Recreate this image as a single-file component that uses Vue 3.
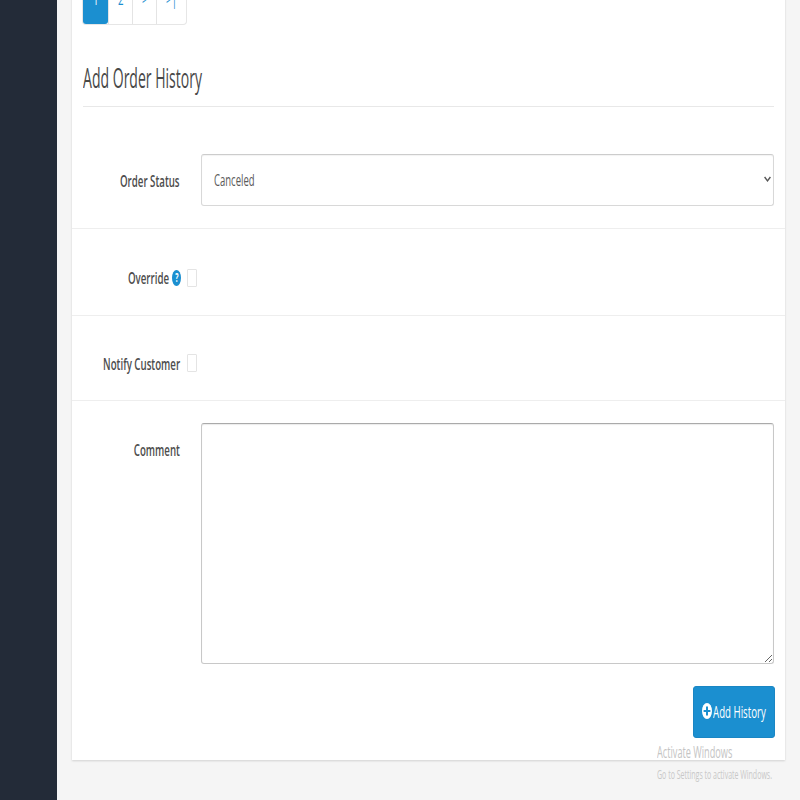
<template>
  <div class="page">
    <aside class="sidebar"></aside>
    <main class="content">
      <section class="card">
        <ul class="pagination">
          <li v-for="(p, i) in pages" :key="p" :class="['page-item', { active: i === 0 }]">
            <span class="squeeze">{{ p }}</span>
          </li>
        </ul>
        <h2 class="title"><span class="squeeze left">Add Order History</span></h2>

        <div class="row">
          <label class="label"><span class="squeeze right">Order Status</span></label>
          <div class="select">
            <span class="squeeze left">Canceled</span>
            <svg class="caret" width="7" height="6" viewBox="0 0 7 6">
              <path d="M.6 1l2.9 3.8L6.4 1" fill="none" stroke="#555" stroke-width="1.4" />
            </svg>
          </div>
        </div>

        <div class="row check-row override">
          <label class="label">
            <span class="squeeze right">Override</span>
            <span class="help"><span class="squeeze">?</span></span>
          </label>
          <input class="check" type="checkbox" />
        </div>

        <div class="row check-row notify">
          <label class="label"><span class="squeeze right pad">Notify Customer</span></label>
          <input class="check" type="checkbox" />
        </div>

        <div class="row comment">
          <label class="label"><span class="squeeze right">Comment</span></label>
          <textarea class="textarea"></textarea>
        </div>

        <div class="actions">
          <button class="btn" type="button">
            <svg class="plus" width="10" height="16" viewBox="0 0 10 16">
              <ellipse cx="5" cy="8" rx="5" ry="8" fill="#fff" />
              <path d="M1.6 8h6.8M5 3.4v9.2" stroke="#1b8fd0" stroke-width="2" />
            </svg>
            <span class="squeeze left">Add History</span>
          </button>
        </div>
      </section>
    </main>

    <div class="watermark">
      <div class="wm-title"><span class="squeeze left">Activate Windows</span></div>
      <div class="wm-sub"><span class="squeeze left">Go to Settings to activate Windows.</span></div>
    </div>
  </div>
</template>

<script setup>
const pages = ['1', '2', '>', '>|']
</script>

<style>
html, body { margin: 0; padding: 0; overflow: hidden; }
</style>

<style scoped>
.page {
  position: relative;
  display: flex;
  height: 800px;
  overflow: hidden;
  background: #f5f5f5;
  font-family: "Open Sans", "Liberation Sans", sans-serif;
  color: #555;
}
.sidebar { width: 57px; flex: none; background: #232b38; }
.content { flex: 1; padding: 0 15px; min-width: 0; }
.card {
  margin-top: -28px;
  height: 788px;
  box-sizing: border-box;
  background: #fff;
  box-shadow: 0 1px 2px rgba(0, 0, 0, .15);
}

/* the shot is squeezed sideways, so every text run gets narrowed */
.squeeze { display: inline-block; white-space: nowrap; transform: scaleX(.57); }
.squeeze.left { transform-origin: left center; }
.squeeze.right { transform-origin: right center; }

.pagination {
  display: flex;
  width: 103px;
  height: 52px;
  margin: 0 0 0 11px;
  padding: 0;
  list-style: none;
  border-radius: 3px;
  box-shadow: 0 0 0 1px #e6e6e6;
}
.page-item {
  flex: none;
  width: 24px;
  box-sizing: border-box;
  display: flex;
  align-items: center;
  justify-content: center;
  border-left: 1px solid #e4e4e4;
  color: #1b8fd0;
  font-size: 17px;
}
.page-item:first-child { width: 25px; border-left: 0; }
.page-item:last-child { width: 30px; }
.page-item.active { background: #1b8fd0; color: #fff; border-radius: 3px; }

.title {
  margin: 26px 11px 25px;
  padding: 5px 0 6px;
  height: 45px;
  box-sizing: content-box;
  border-bottom: 1px solid #e8e8e8;
  font-size: 27px;
  line-height: 45px;
  font-weight: 400;
  color: #484848;
}
.title .squeeze { transform: scaleX(.52); }

.row {
  display: grid;
  grid-template-columns: 97px 1fr;
  column-gap: 21px;
  align-items: center;
  padding: 22px 11px;
  border-bottom: 1px solid #eee;
}
.label {
  display: flex;
  justify-content: flex-end;
  align-items: center;
  gap: 3px;
  font-size: 17px;
  font-weight: 600;
  color: #4d4d4d;
}
.select {
  display: flex;
  align-items: center;
  justify-content: space-between;
  height: 52px;
  box-sizing: border-box;
  padding: 0 2px 2px 12px;
  border: 1px solid #d8d8d8;
  border-top-color: #ccc;
  border-radius: 3px;
  box-shadow: inset 0 1px 1px rgba(0, 0, 0, .05);
  font-size: 17px;
  color: #5a5a5a;
}
.select .squeeze { transform: scaleX(.56); }
.caret { flex: none; }

.check-row { grid-template-columns: 98px 1fr; column-gap: 6px; box-sizing: border-box; }
.override { height: 87px; padding: 28px 11px 17px; }
.notify { height: 85px; padding: 27px 11px 17px; }
.pad { margin-right: 1px; }
.check {
  appearance: none;
  width: 10px;
  height: 18px;
  margin: 0;
  background: #fff;
  border: 1px solid #e4e4e4;
  border-radius: 1px;
}
.help {
  display: flex;
  align-items: center;
  justify-content: center;
  width: 9px;
  height: 16px;
  border-radius: 50%;
  background: #1b8fd0;
  color: #fff;
  font-size: 12px;
  font-weight: 700;
}

.comment { align-items: start; border-bottom: 0; padding-bottom: 0; }
.comment .label { padding-top: 15px; }
.textarea {
  display: block;
  width: 100%;
  height: 241px;
  box-sizing: border-box;
  margin: 0;
  padding: 0;
  border: 1px solid #c8c8c8;
  border-top-color: #aaa;
  border-radius: 3px;
  box-shadow: inset 0 1px 1px rgba(0, 0, 0, .08);
  outline: 0;
}

.actions { display: flex; justify-content: flex-end; padding: 22px 10px 0 0; }
.btn {
  display: flex;
  align-items: center;
  gap: 1px;
  width: 82px;
  height: 52px;
  box-sizing: border-box;
  padding: 0 0 2px 8px;
  border: 1px solid #1a86c4;
  border-radius: 3px;
  background: #1b8fd0;
  color: #fff;
  font-family: inherit;
  font-size: 17px;
  font-weight: 400;
}
.plus { flex: none; }

.watermark {
  position: absolute;
  left: 657px;
  top: 741px;
  color: #c4c4c4;
  pointer-events: none;
}
.wm-title { font-size: 17px; line-height: 22px; }
.wm-sub { font-size: 13px; line-height: 22px; color: #c8c8c8; }
.wm-sub .squeeze { transform: scaleX(.54); }
.wm-title .squeeze { transform: scaleX(.54); }
</style>
